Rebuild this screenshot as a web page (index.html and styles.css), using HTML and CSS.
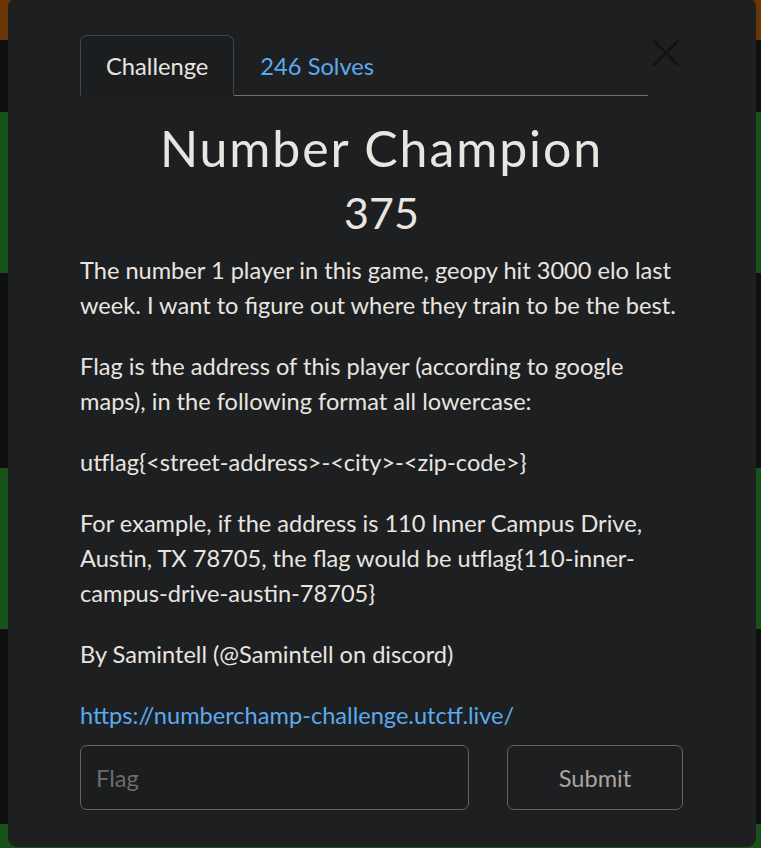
FILE: index.html
```html
<!DOCTYPE html>
<html lang="en">
<head>
<meta charset="utf-8">
<title>Number Champion</title>
<link rel="stylesheet" href="styles.css">
</head>
<body>
<div class="modal">
  <button class="close" aria-label="Close">
    <svg width="26" height="26" viewBox="0 0 26 26"><path d="M1.5 1.5 L24.5 24.5 M24.5 1.5 L1.5 24.5" stroke="currentColor" stroke-width="2.6" stroke-linecap="round"/></svg>
  </button>
  <nav class="tabs">
    <a class="tab active">Challenge</a>
    <a class="tab">246 Solves</a>
  </nav>
  <h2 class="name">Number Champion</h2>
  <h3 class="value">375</h3>
  <div class="desc">
    <p>The number 1 player in this game, geopy hit 3000 elo last week. I want to figure out where they train to be the best.</p>
    <p>Flag is the address of this player (according to google maps), in the following format all lowercase:</p>
    <p>utflag{&lt;street-address&gt;-&lt;city&gt;-&lt;zip-code&gt;}</p>
    <p>For example, if the address is 110 Inner Campus Drive, Austin, TX 78705, the flag would be utflag{110-inner-campus-drive-austin-78705}</p>
    <p>By Samintell (@Samintell on discord)</p>
    <p class="last"><a class="link">https://numberchamp-challenge.utctf.live/</a></p>
  </div>
  <form class="submit-row">
    <input class="flag" type="text" placeholder="Flag">
    <button class="btn" type="button">Submit</button>
  </form>
</div>
</body>
</html>
```

FILE: styles.css
```css
html, body {
  margin: 0;
  padding: 0;
}
body {
  width: 761px;
  height: 848px;
  overflow: hidden;
  font-family: Lato, "Open Sans", sans-serif;
  background: linear-gradient(to bottom,
    #6a3606 0, #6a3606 40px,
    #0f1110 40px, #0f1110 112px,
    #17521a 112px, #17521a 273px,
    #0f1110 273px, #0f1110 468px,
    #17521a 468px, #17521a 629px,
    #0f1110 629px, #0f1110 824px,
    #17521a 824px);
}
.modal {
  position: relative;
  box-sizing: border-box;
  margin: -2px 0 0 8px;
  width: 748px;
  height: 849px;
  background: #1e1f21;
  border-radius: 9px;
  padding: 37px 73px 0 72px;
  color: #e8e5e0;
}
.close {
  position: absolute;
  top: 42px;
  right: 77px;
  width: 26px;
  height: 26px;
  padding: 0;
  border: 0;
  background: none;
  color: #111312;
  display: flex;
}
.tabs {
  display: flex;
  width: 568px;
  border-bottom: 1px solid #7a6d5e;
  height: 60px;
}
.tab {
  display: flex;
  align-items: center;
  padding: 0 25px;
  font-size: 23.7px;
  color: #5aaaf0;
  border: 1px solid transparent;
  border-bottom: 0;
  border-radius: 7px 7px 0 0;
  margin-bottom: -1px;
}
.tab.active {
  color: #e8e5e0;
  background: #1c1d1f;
  border-color: #41454c;
  border-bottom: 1px solid #1c1d1f;
}
.name {
  margin: 22px 0 0;
  text-align: center;
  font-weight: 400;
  font-size: 50px;
  line-height: 60px;
  letter-spacing: 1.9px;
  color: #e9e6e1;
}
.value {
  margin: 9px 0 0;
  text-align: center;
  font-weight: 400;
  font-size: 43px;
  line-height: 52px;
  color: #e9e6e1;
}
.desc {
  margin-top: 14px;
}
.desc p {
  margin: 0 0 26px;
  font-size: 23.6px;
  line-height: 35px;
}
.desc p.last {
  margin-bottom: 12px;
}
.link {
  color: #5aaaf0;
}
.submit-row {
  display: flex;
  gap: 38px;
  margin: 0;
}
.flag {
  box-sizing: border-box;
  width: 389px;
  height: 65px;
  background: #1c1d1f;
  border: 1px solid #6c6355;
  border-radius: 7px;
  padding: 0 15px;
  font-family: Lato, sans-serif;
  font-size: 23.6px;
  color: #e8e5e0;
  outline: none;
}
.flag::placeholder {
  color: #6c6c6a;
}
.btn {
  box-sizing: border-box;
  width: 176px;
  height: 65px;
  background: #1e1f21;
  border: 1px solid #6c6355;
  border-radius: 7px;
  font-family: Lato, sans-serif;
  font-size: 23.6px;
  color: #aaa59c;
}
```
